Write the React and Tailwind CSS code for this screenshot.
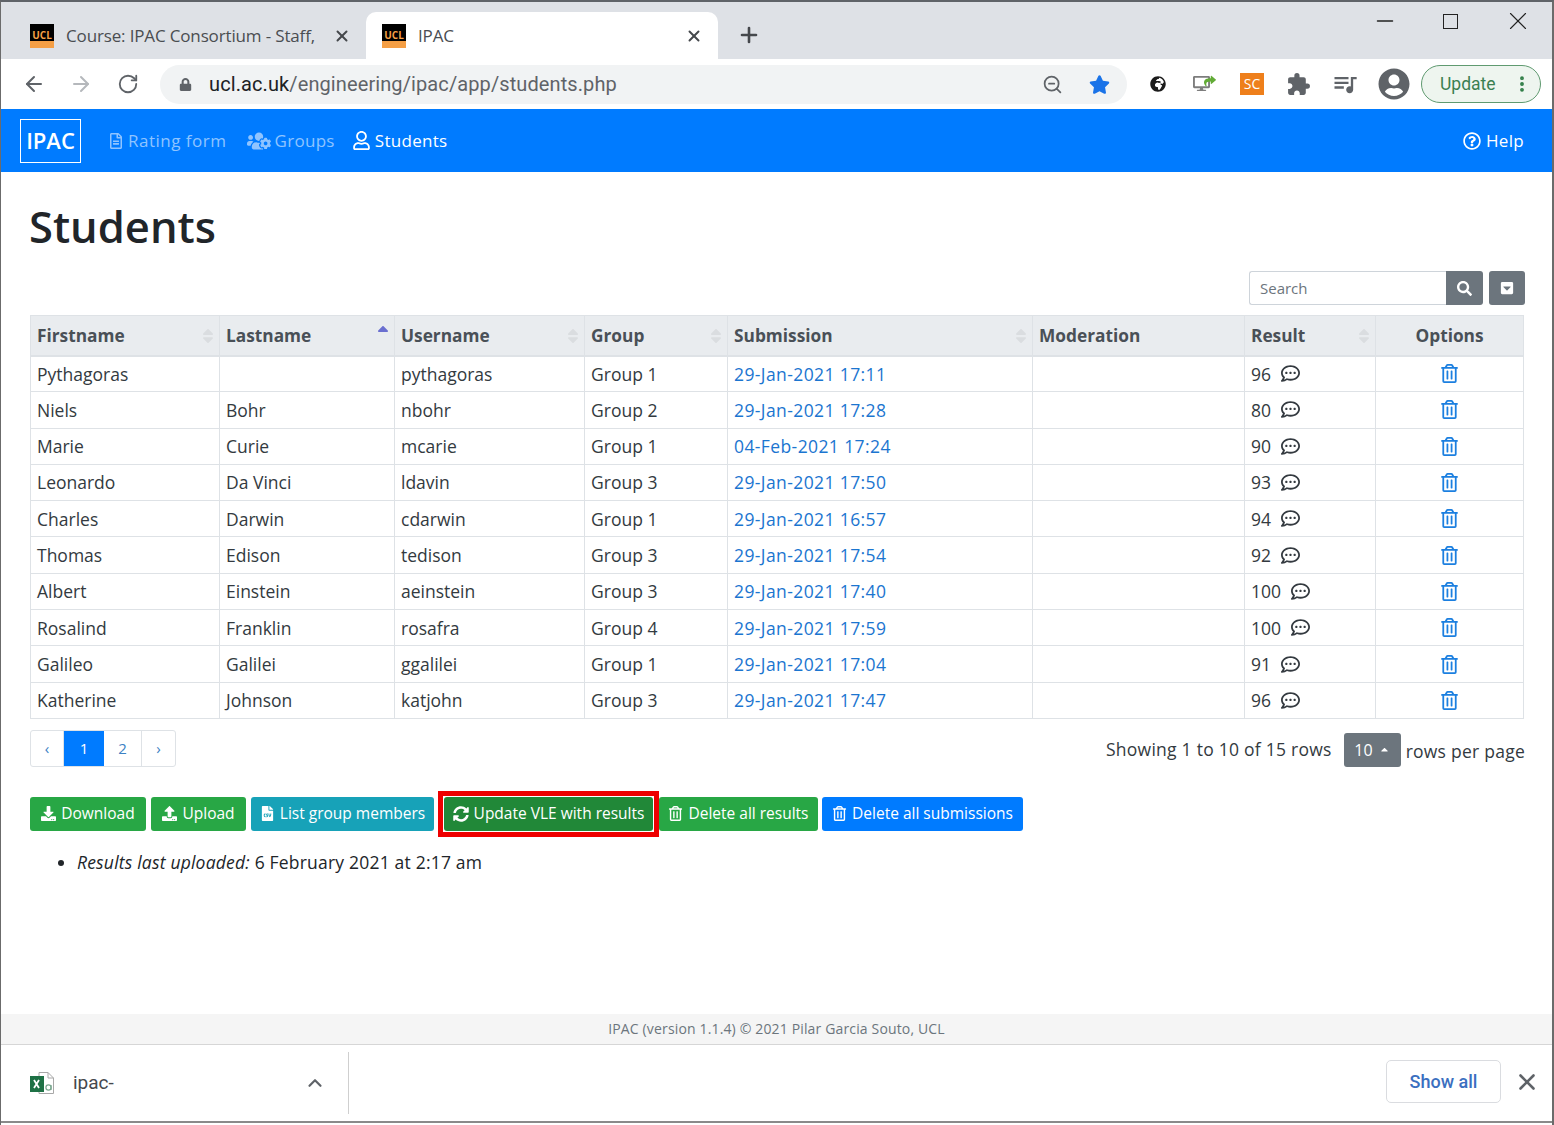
import { ArrowLeft, ArrowRight, RotateCw, ZoomOut, Plus, X, Minus, ChevronUp, EllipsisVertical } from "lucide-react"
import {
  FaLock, FaStar, FaUserCircle, FaRegFileAlt, FaUsersCog, FaRegUser, FaRegQuestionCircle,
  FaRegCommentDots, FaRegTrashAlt, FaDownload, FaUpload, FaFileCsv, FaSyncAlt, FaSearch, FaCaretSquareDown,
  FaGlobeAfrica, FaDesktop, FaShare, FaCaretUp, FaSort, FaSortUp,
} from "react-icons/fa"
import { MdExtension, MdQueueMusic } from "react-icons/md"

const students = [
  ["Pythagoras", "", "pythagoras", "Group 1", "29-Jan-2021 17:11", "96"],
  ["Niels", "Bohr", "nbohr", "Group 2", "29-Jan-2021 17:28", "80"],
  ["Marie", "Curie", "mcarie", "Group 1", "04-Feb-2021 17:24", "90"],
  ["Leonardo", "Da Vinci", "ldavin", "Group 3", "29-Jan-2021 17:50", "93"],
  ["Charles", "Darwin", "cdarwin", "Group 1", "29-Jan-2021 16:57", "94"],
  ["Thomas", "Edison", "tedison", "Group 3", "29-Jan-2021 17:54", "92"],
  ["Albert", "Einstein", "aeinstein", "Group 3", "29-Jan-2021 17:40", "100"],
  ["Rosalind", "Franklin", "rosafra", "Group 4", "29-Jan-2021 17:59", "100"],
  ["Galileo", "Galilei", "ggalilei", "Group 1", "29-Jan-2021 17:04", "91"],
  ["Katherine", "Johnson", "katjohn", "Group 3", "29-Jan-2021 17:47", "96"],
]

const headers = [
  ["Firstname", "w-[189px]", "sort"],
  ["Lastname", "w-[175px]", "up"],
  ["Username", "w-[190px]", "sort"],
  ["Group", "w-[143px]", "sort"],
  ["Submission", "w-[305px]", "sort"],
  ["Moderation", "w-[212px]", ""],
  ["Result", "w-[131px]", "sort"],
]

function UclIcon() {
  return (
    <div className="w-[24px] h-[24px] shrink-0 flex flex-col overflow-hidden">
      <div className="h-[17px] bg-black text-[#f59f45] text-[10px] font-bold leading-[17px] text-center pt-[3px]">UCL</div>
      <div className="h-[7px] bg-[#f59f45]" />
    </div>
  )
}

function ExcelIcon() {
  return (
    <svg width="26" height="26" viewBox="0 0 26 26">
      <path d="M10 2.5h9l5.5 5.5v15.5H10z" fill="#fff" stroke="#a8a8a8" />
      <path d="M19 2.5V8h5.5" fill="none" stroke="#a8a8a8" />
      <rect x="1" y="6" width="14" height="16" fill="#1e7145" />
      <path d="M5 10l5 8M10 10l-5 8" stroke="#fff" strokeWidth="1.8" />
      <circle cx="19.5" cy="17.5" r="2.6" fill="none" stroke="#7ba78f" strokeWidth="1.2" />
      <path d="M22 15v5" stroke="#7ba78f" strokeWidth="1.2" />
    </svg>
  )
}

function Tab({ title, active }) {
  return (
    <div className={`w-[352px] h-[47px] flex items-center pl-[16px] pr-[15px] rounded-t-[10px] ${active ? "bg-white" : ""}`}>
      <UclIcon />
      <span className="ml-[12px] flex-1 text-[17px] tracking-[-0.15px] text-[#4a4d51] whitespace-nowrap">{title}</span>
      <X size={18} strokeWidth={2.6} className="text-[#45484c] ml-[10px]" />
    </div>
  )
}

function ActionButton({ className, icon, label }) {
  return (
    <button className={`h-[34px] rounded-[3px] text-white text-[15.5px] flex items-center justify-center gap-[5px] whitespace-nowrap ${className}`}>
      {icon}
      {label}
    </button>
  )
}

export default function App() {
  return (
    <div className="w-[1554px] h-[1125px] overflow-hidden bg-white flex flex-col border-l border-l-[#6b6b6b] border-r-2 border-r-[#6b6b6b] border-t-2 border-t-[#5f6368] font-['Open_Sans',sans-serif] text-[#333a40]">

      {/* tab strip */}
      <div className="h-[57px] shrink-0 bg-[#dee1e6] flex items-end pl-[13px]">
        <Tab title="Course: IPAC Consortium - Staff," />
        <Tab title="IPAC" active />
        <Plus size={24} strokeWidth={2.6} className="text-[#45484c] ml-[19px] mb-[12px]" />
        <div className="ml-auto self-start flex items-center gap-[45px] pr-[19px] pt-[4px] text-[#222]">
          <Minus size={26} strokeWidth={1.2} />
          <div className="w-[15px] h-[15px] border-[1.5px] border-[#222]" />
          <X size={30} strokeWidth={0.9} />
        </div>
      </div>

      {/* address bar */}
      <div className="h-[50px] shrink-0 bg-white flex items-center pl-[21px]">
        <ArrowLeft size={24} strokeWidth={2} className="text-[#5f6368]" />
        <ArrowRight size={24} strokeWidth={2} className="text-[#b5b8bc] ml-[23px]" />
        <RotateCw size={22} strokeWidth={2} className="text-[#5f6368] ml-[24px]" />
        <div className="ml-[21px] w-[967px] h-[39px] rounded-full bg-[#f1f3f4] flex items-center pl-[19px] pr-[17px]">
          <FaLock size={13} className="text-[#5f6368]" />
          <span className="ml-[17px] text-[20px] tracking-[0.1px] text-[#5f6368] font-['Roboto',sans-serif] whitespace-nowrap"><span className="text-[#202124]">ucl.ac.uk</span>/engineering/ipac/app/students.php</span>
          <ZoomOut size={21} className="text-[#5f6368] ml-auto" />
          <FaStar size={21} className="text-[#1a73e8] ml-[26px]" />
        </div>
        <FaGlobeAfrica size={16} className="text-[#1b1b1b] ml-[23px]" />
        <div className="relative ml-[27px] w-[23px] h-[18px]">
          <FaDesktop size={17} className="text-[#7d7d7d]" />
          <FaShare size={12} className="absolute right-0 top-0 text-[#62ab36]" />
        </div>
        <div className="ml-[24px] w-[24px] h-[22px] bg-[#ee7f1b] text-white text-[14px] leading-[22px] text-center">SC</div>
        <MdExtension size={25} className="text-[#5f6368] ml-[22px]" />
        <MdQueueMusic size={28} className="text-[#5f6368] ml-[20px]" />
        <FaUserCircle size={32} className="text-[#5f6368] ml-[19px]" />
        <div className="ml-[11px] w-[120px] h-[38px] rounded-full bg-[#eef5ef] border border-[#5f9a70] flex items-center pl-[18px] pr-[8px] justify-between">
          <span className="text-[17.5px] text-[#3b7f51] font-['Roboto',sans-serif]">Update</span>
          <EllipsisVertical size={20} strokeWidth={2.6} className="text-[#2f7d46]" />
        </div>
      </div>

      {/* navbar */}
      <div className="h-[63px] shrink-0 bg-[#007bff] flex items-center pl-[19px] pr-[28px] text-[17px] tracking-[0.3px] text-white">
        <div className="w-[61px] h-[44px] border border-white flex items-center justify-center text-[22px] font-semibold tracking-normal">IPAC</div>
        <a className="ml-[27px] flex items-center gap-[4px] text-[#8fc4ff] tracking-[0.5px]"><FaRegFileAlt size={16} />Rating form</a>
        <a className="ml-[20px] flex items-center gap-[4px] text-[#8fc4ff]"><FaUsersCog size={24} />Groups</a>
        <a className="ml-[17px] flex items-center gap-[4px]"><FaRegUser size={19} />Students</a>
        <a className="ml-auto flex items-center gap-[5px]"><FaRegQuestionCircle size={18} />Help</a>
      </div>

      {/* content */}
      <div className="flex-1 min-h-0 pl-[29px] pr-[27px]">
        <h1 className="text-[43.5px] leading-[52px] font-semibold text-[#212529] mt-[29px] -ml-[1px]">Students</h1>

        <div className="flex justify-end mt-[18px] gap-[6px]">
          <div className="flex h-[34px]">
            <div className="w-[197px] border border-[#ced4da] border-r-0 rounded-l-[3px] pl-[10px] text-[15px] leading-[32px] text-[#6c757d]">Search</div>
            <div className="w-[37px] bg-[#6c757d] rounded-r-[3px] flex items-center justify-center"><FaSearch size={15} className="text-white" /></div>
          </div>
          <div className="w-[36px] h-[34px] bg-[#6c757d] rounded-[3px] flex items-center justify-center"><FaCaretSquareDown size={14} className="text-white" /></div>
        </div>

        <table className="mt-[10px] w-[1494px] table-fixed border-collapse text-[17.5px]">
          <thead>
            <tr className="h-[40px] bg-[#e9ecef] text-[#495057]">
              {headers.map(([name, width, sort]) => (
                <th key={name} className={`${width} relative border border-[#dee2e6] border-b-2 text-left text-[17.3px] font-bold pl-[6px] pt-[2px]`}>
                  {name}
                  {sort === "sort" && <FaSort size={18} className="absolute right-[2px] top-[11px] text-[#dadde0]" />}
                  {sort === "up" && <FaSortUp size={18} className="absolute right-[2px] top-[8px] text-[#6a6fd0]" />}
                </th>
              ))}
              <th className="border border-[#dee2e6] border-b-2 text-[17.3px] font-bold text-center pt-[2px]">Options</th>
            </tr>
          </thead>
          <tbody>
            {students.map((s) => (
              <tr key={s[2]} className="h-[36.3px]">
                <td className="border border-[#dee2e6] pl-[6px]">{s[0]}</td>
                <td className="border border-[#dee2e6] pl-[6px]">{s[1]}</td>
                <td className="border border-[#dee2e6] pl-[6px]">{s[2]}</td>
                <td className="border border-[#dee2e6] pl-[6px]">{s[3]}</td>
                <td className="border border-[#dee2e6] pl-[6px] text-[#1b75d0] tracking-[0.4px]">{s[4]}</td>
                <td className="border border-[#dee2e6]" />
                <td className="border border-[#dee2e6] pl-[6px]">
                  <span className="inline-flex items-center gap-[10px]">{s[5]}<FaRegCommentDots size={19} className="text-[#343a40]" /></span>
                </td>
                <td className="border border-[#dee2e6]"><FaRegTrashAlt size={19} className="text-[#1b7fe0] mx-auto" /></td>
              </tr>
            ))}
          </tbody>
        </table>

        <div className="flex items-start justify-between mt-[11px]">
          <div className="flex h-[37px] border border-[#dee2e6] rounded-[3px] text-[#3b82c4] text-[15px] leading-[35px] text-center">
            <div className="w-[33px] border-r border-[#dee2e6]">‹</div>
            <div className="w-[40px] bg-[#007bff] text-white">1</div>
            <div className="w-[38px] border-r border-[#dee2e6]">2</div>
            <div className="w-[33px]">›</div>
          </div>
          <div className="flex items-center text-[17.5px] tracking-[0.25px] mt-[1px]">
            <span>Showing 1 to 10 of 15 rows</span>
            <div className="ml-[12px] mr-[5px] mt-[2px] w-[57px] h-[34px] bg-[#6c757d] rounded-[3px] text-white text-[16px] flex items-center justify-center gap-[6px]">10<FaCaretUp size={11} /></div>
            <span className="mt-[4px]">rows per page</span>
          </div>
        </div>

        <div className="flex items-center mt-[30px]">
          <ActionButton className="w-[116px] bg-[#28a745]" icon={<FaDownload size={15} />} label="Download" />
          <ActionButton className="w-[95px] ml-[5px] bg-[#28a745]" icon={<FaUpload size={15} />} label="Upload" />
          <ActionButton className="w-[183px] ml-[5px] bg-[#17a2b8]" icon={<FaFileCsv size={15} />} label="List group members" />
          <div className="ml-[4px] w-[221px] border-[5px] border-[#ee0000] p-[1px] -my-[6px]">
            <ActionButton className="w-full bg-[#218838]" icon={<FaSyncAlt size={16} />} label="Update VLE with results" />
          </div>
          <ActionButton className="w-[159px] bg-[#28a745]" icon={<FaRegTrashAlt size={15} />} label="Delete all results" />
          <ActionButton className="w-[201px] ml-[4px] bg-[#007bff]" icon={<FaRegTrashAlt size={15} />} label="Delete all submissions" />
        </div>

        <ul className="list-disc pl-[47px] mt-[18px] text-[17.5px] tracking-[0.2px] text-[#212529]">
          <li><em>Results last uploaded:</em> 6 February 2021 at 2:17 am</li>
        </ul>
      </div>

      {/* footer */}
      <div className="h-[31px] shrink-0 bg-[#f5f5f5] border-b border-[#d6d6d6] text-center text-[14px] tracking-[0.15px] leading-[30px] text-[#6c757d]">
        IPAC (version 1.1.4) © 2021 Pilar Garcia Souto, UCL
      </div>

      {/* download shelf */}
      <div className="h-[76px] shrink-0 bg-white flex items-center pl-[28px] pr-[12px]">
        <ExcelIcon />
        <span className="ml-[18px] text-[19px] text-[#45484c] font-['Roboto',sans-serif]">ipac-</span>
        <ChevronUp size={22} strokeWidth={2.4} className="text-[#5f6368] ml-[190px]" />
        <div className="ml-[22px] w-px h-[62px] bg-[#cfcfcf]" />
        <button className="ml-auto mb-[3px] w-[115px] h-[43px] border border-[#dadce0] rounded-[5px] text-[#3b6fc0] text-[18px] font-medium font-['Roboto',sans-serif]">Show all</button>
        <X size={26} strokeWidth={2.4} className="text-[#5f6368] ml-[13px] mb-[3px]" />
      </div>
      <div className="h-[2px] shrink-0 bg-[#8a8a8a]" />
      <div className="h-[2px] shrink-0 bg-white" />
    </div>
  )
}
